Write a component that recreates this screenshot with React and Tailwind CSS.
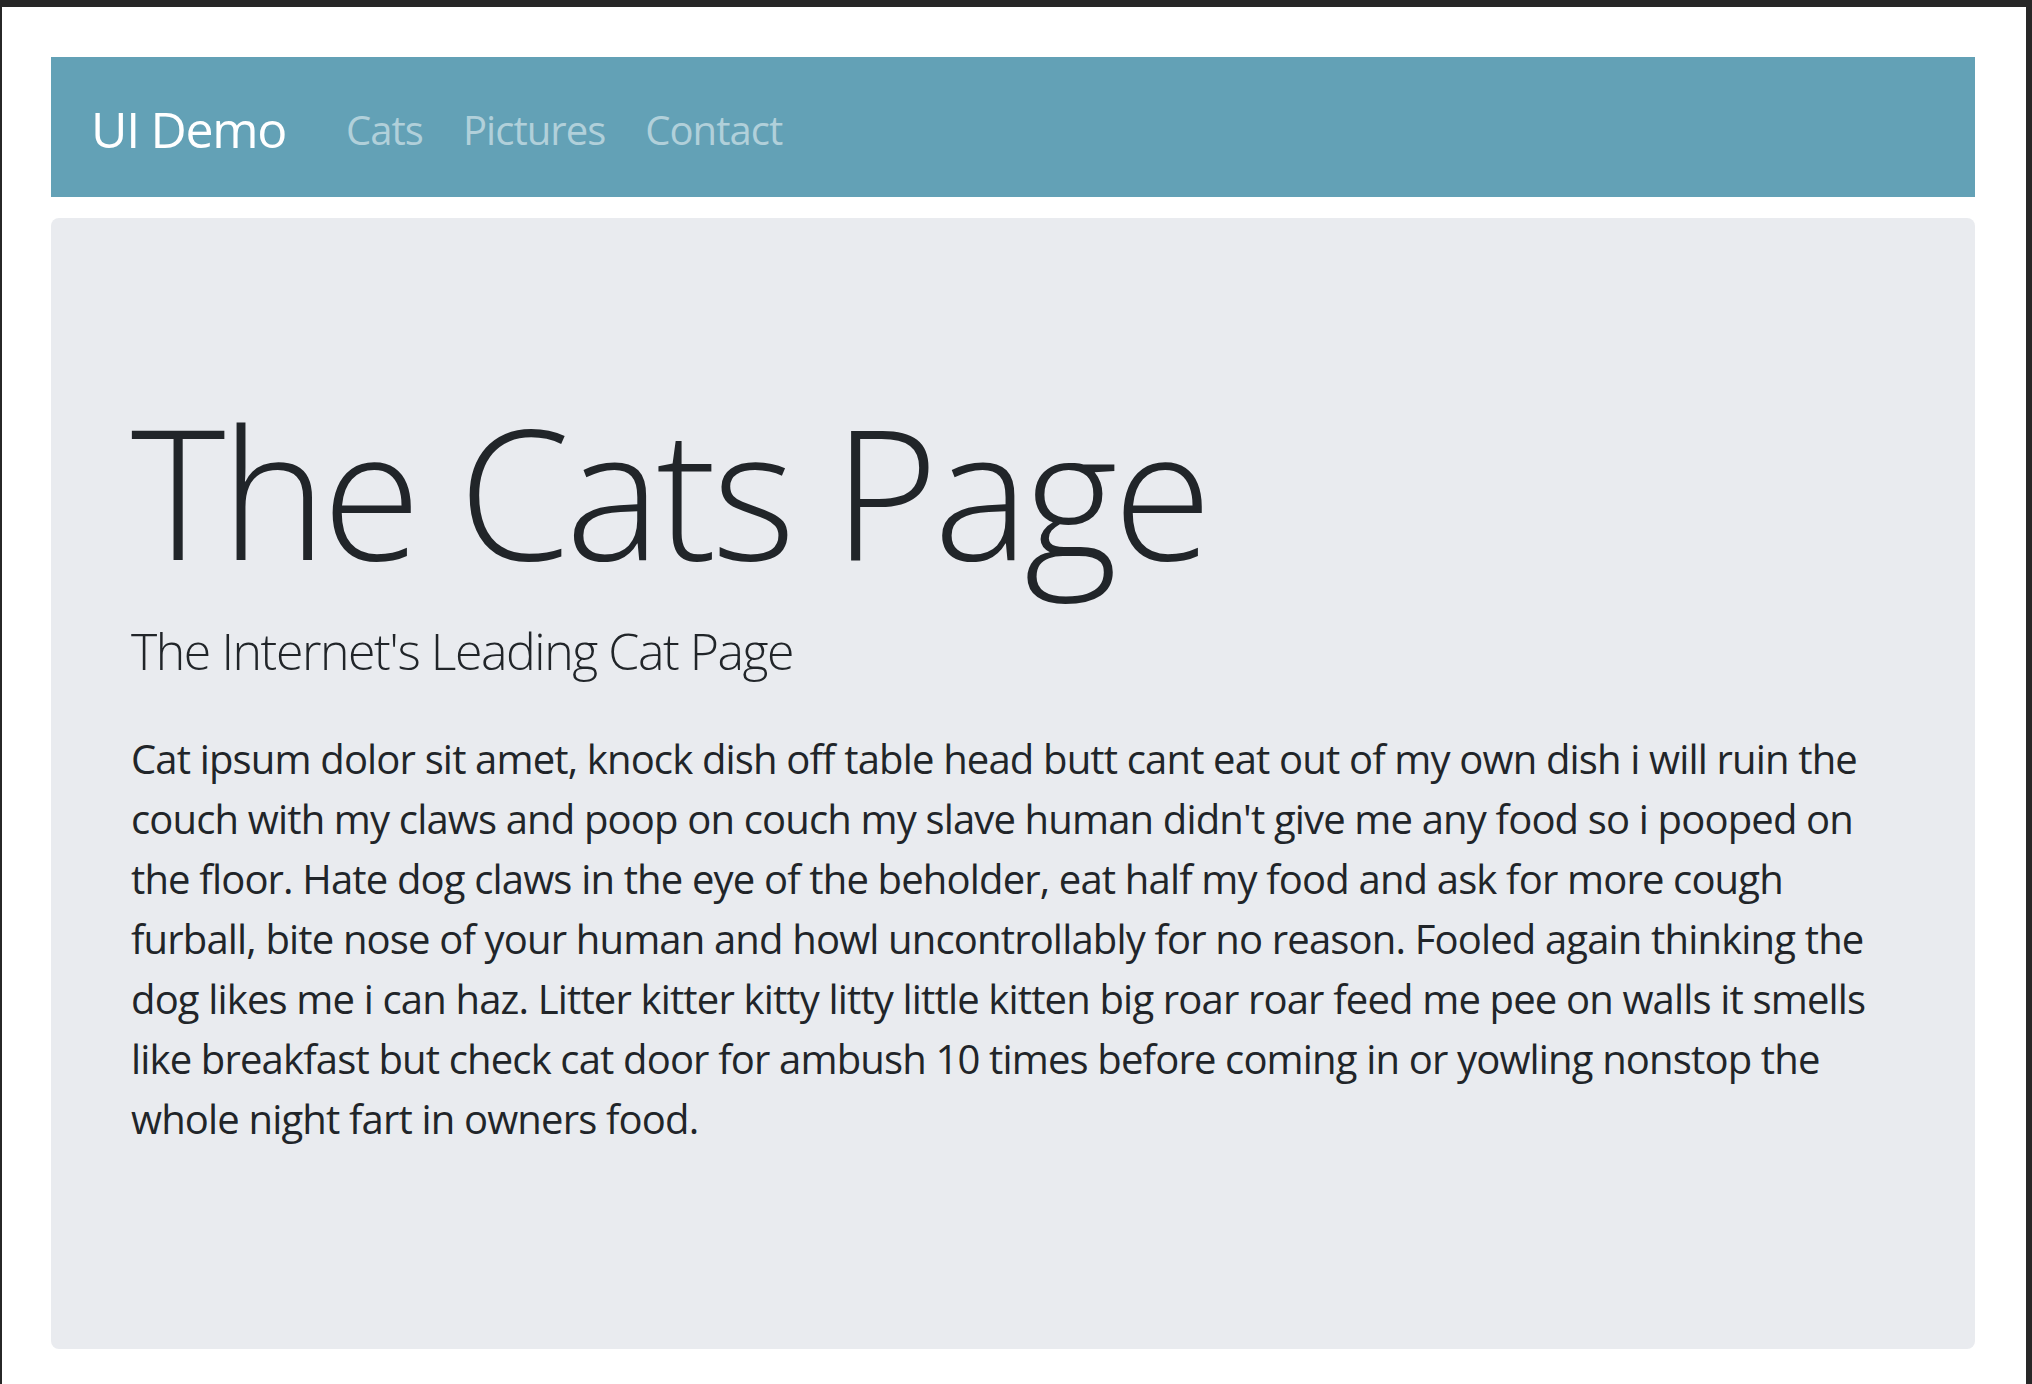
export default function App() {
  const lines = [
    "Cat ipsum dolor sit amet, knock dish off table head butt cant eat out of my own dish i will ruin the",
    "couch with my claws and poop on couch my slave human didn't give me any food so i pooped on",
    "the floor. Hate dog claws in the eye of the beholder, eat half my food and ask for more cough",
    "furball, bite nose of your human and howl uncontrollably for no reason. Fooled again thinking the",
    "dog likes me i can haz. Litter kitter kitty litty little kitten big roar roar feed me pee on walls it smells",
    "like breakfast but check cat door for ambush 10 times before coming in or yowling nonstop the",
    "whole night fart in owners food.",
  ];
  return (
    <div className="min-h-screen bg-[#272727] pt-[7px] pl-[2px] pr-[6px]">
      <div className="h-[1377px] bg-white pl-[49px] pr-[51px] pt-[50px] font-['Segoe_UI','Open_Sans',sans-serif] text-[#212529]">
        <nav className="flex h-[140px] items-center bg-[#63a1b6] px-[40px] pt-[5px]">
          <span className="mr-[40px] text-[50px] leading-[75px] tracking-[-0.026em] text-white">UI Demo</span>
          <ul className="flex items-center">
            {["Cats", "Pictures", "Contact"].map((t) => (
              <li key={t} className="px-[20px] text-[40px] leading-[60px] tracking-[-0.024em] text-[#b1d0da]">
                {t}
              </li>
            ))}
          </ul>
        </nav>
        <div className="mt-[21px] rounded-[8px] bg-[#e9ebef] px-[80px] pt-[160px] pb-[160px]">
          <h1 className="mb-[20px] pt-[10px] text-[180px] font-light leading-[206px] tracking-[-0.026em]">The Cats Page</h1>
          <p className="mb-[40px] text-[50px] font-light leading-[75px] tracking-[-0.029em]">The Internet's Leading Cat Page</p>
          <p className="mb-[40px] text-[40px] leading-[60px] tracking-[-0.021em]">
            {lines.map((l, i) => (
              <span key={i} className="block whitespace-nowrap">
                {l}
              </span>
            ))}
          </p>
        </div>
      </div>
    </div>
  );
}
